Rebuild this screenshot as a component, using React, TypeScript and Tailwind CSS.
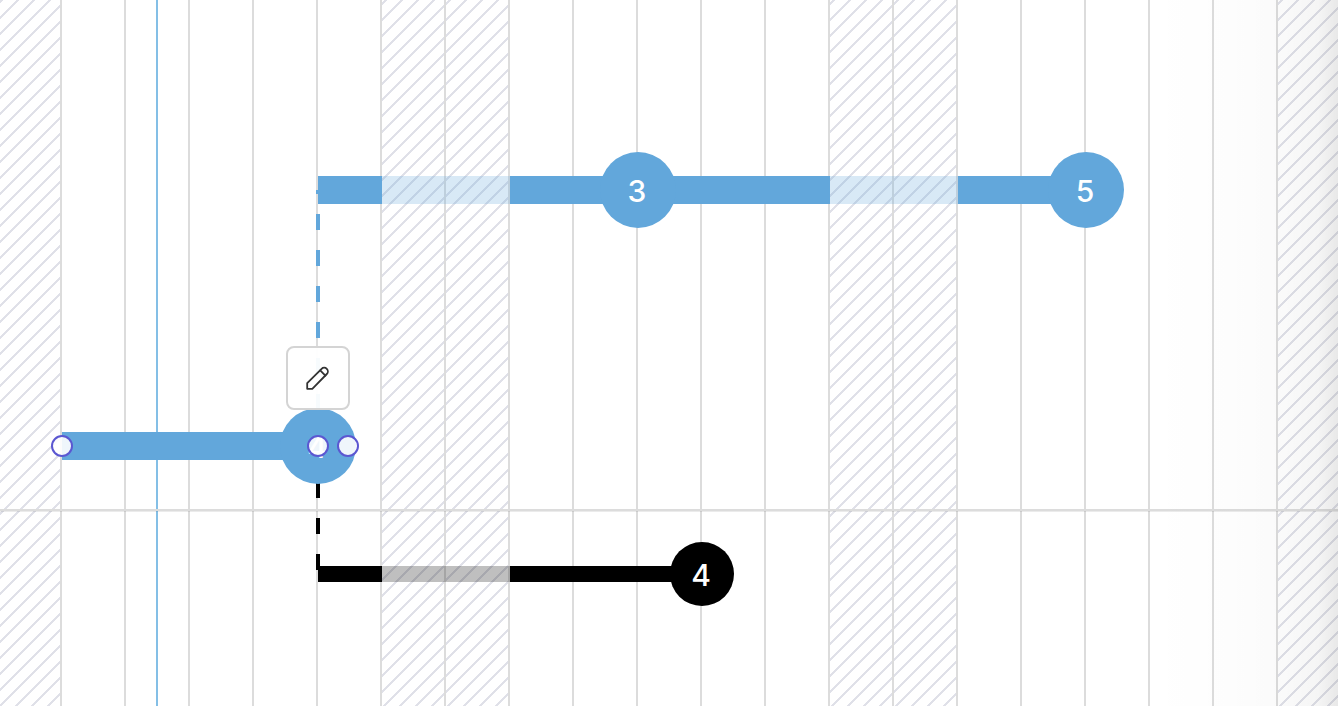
import React from "react";

type Tone = "blue" | "black";

const DAYS = Array.from({ length: 60 }, (_, i) => i);

const isWeekend = (day: number) => day % 7 === 5 || day % 7 === 6;

function Calendar() {
  return (
    <div
      aria-hidden="true"
      className="col-start-1 row-start-1 flex overflow-hidden bg-[image:linear-gradient(135deg,#dfe0e8_3%,transparent_6%,transparent_44%,#dfe0e8_47%,#dfe0e8_53%,transparent_56%,transparent_94%,#dfe0e8_97%)] bg-[length:16px_16px] bg-[position:2px_0px]"
    >
      <div className="w-[62px] shrink-0 border-r-2 border-[#dcdcdc]" />
      {DAYS.map((day) => (
        <div
          key={day}
          className={
            isWeekend(day)
              ? "w-16 shrink-0 border-r-2 border-[#dcdcdc]"
              : "w-16 shrink-0 border-r-2 border-[#dcdcdc] bg-white"
          }
        />
      ))}
    </div>
  );
}

function Segment({ tone, width, off = false }: { tone: Tone; width: number; off?: boolean }) {
  const size = tone === "blue" ? "h-7 bg-[#62a7db]" : "h-4 bg-black";
  return <div className={`${size} shrink-0 ${off ? "opacity-25" : ""}`} style={{ width }} />;
}

function Node({ tone, label }: { tone: Tone; label: string }) {
  const look =
    tone === "blue" ? "-mx-[38px] size-[76px] bg-[#62a7db]" : "-mx-8 size-16 bg-black";
  return (
    <div
      className={`${look} relative z-10 flex shrink-0 items-center justify-center rounded-full pt-0.5 pr-0.5 text-[30px] leading-none font-medium text-white`}
    >
      {label}
    </div>
  );
}

function Handle({ label, className }: { label: string; className: string }) {
  return (
    <button
      type="button"
      aria-label={label}
      className={`${className} absolute top-[27px] z-20 size-[22px] rounded-full border-2 border-[#5b57d1] bg-white/90`}
    />
  );
}

export default function App() {
  return (
    <main className="relative grid min-h-screen grid-cols-1 overflow-hidden bg-white font-[family-name:Inter,sans-serif]">
      <Calendar />
      <div
        aria-hidden="true"
        className="col-start-1 row-start-1 ml-[156px] w-0.5 bg-[#84bfe6]"
      />

      <div className="relative col-start-1 row-start-1 flex flex-col overflow-hidden">
        <section className="relative border-b-2 border-[#dcdcdc] pt-[152px] pb-[25px]">
          <div className="absolute top-[190px] left-[316px] h-[220px] w-1 bg-[repeating-linear-gradient(to_bottom,#62a7db_0px,#62a7db_4px,transparent_4px,transparent_24px,#62a7db_24px,#62a7db_36px)]" />
          <div className="relative flex h-[76px] items-center pl-[318px]">
            <Segment tone="blue" width={64} />
            <Segment tone="blue" width={128} off />
            <Segment tone="blue" width={128} />
            <Node tone="blue" label="3" />
            <Segment tone="blue" width={192} />
            <Segment tone="blue" width={128} off />
            <Segment tone="blue" width={128} />
            <Node tone="blue" label="5" />
          </div>

          <div className="relative z-10 mt-[180px] flex h-[76px] items-center pl-[62px]">
            <Segment tone="blue" width={256} />
            <Node tone="blue" label="4" />
            <Handle label="Move start" className="left-[51px]" />
            <Handle label="Move end" className="left-[307px]" />
            <Handle label="Resize" className="left-[337px]" />
            <button
              type="button"
              aria-label="Edit"
              className="absolute -top-[62px] left-[286px] z-20 flex size-16 items-center justify-center rounded-lg border-2 border-[#d4d4d4] bg-white/95"
            >
              <svg
                viewBox="0 0 24 24"
                className="size-6"
                fill="none"
                stroke="#333333"
                strokeWidth="1.8"
                strokeLinejoin="round"
                strokeLinecap="round"
              >
                <path d="M1.2 22.8V17.2L15.6 2.8a3.6 3.6 0 0 1 5.2 5.2L6.3 22.8Z" />
                <path d="M14.2 4.4l5.2 5.2" />
              </svg>
            </button>
          </div>
        </section>

        <section className="relative grow border-t border-black/8 pt-[30px] pb-[25px]">
          <div className="absolute -top-[30px] left-[316px] h-[88px] w-1 bg-[repeating-linear-gradient(to_bottom,#000_0px,#000_16px,transparent_16px,transparent_36px)]" />
          <div className="relative flex h-16 items-center pl-[318px]">
            <Segment tone="black" width={64} />
            <Segment tone="black" width={128} off />
            <Segment tone="black" width={192} />
            <Node tone="black" label="4" />
          </div>
        </section>
      </div>

      <div
        aria-hidden="true"
        className="pointer-events-none relative z-20 col-start-1 row-start-1 w-[190px] justify-self-end bg-[linear-gradient(to_right,transparent_0px,rgba(0,0,0,0.008)_80px,rgba(0,0,0,0.018)_135px,rgba(0,0,0,0.04)_170px,rgba(0,0,0,0.09)_190px)]"
      />
    </main>
  );
}
